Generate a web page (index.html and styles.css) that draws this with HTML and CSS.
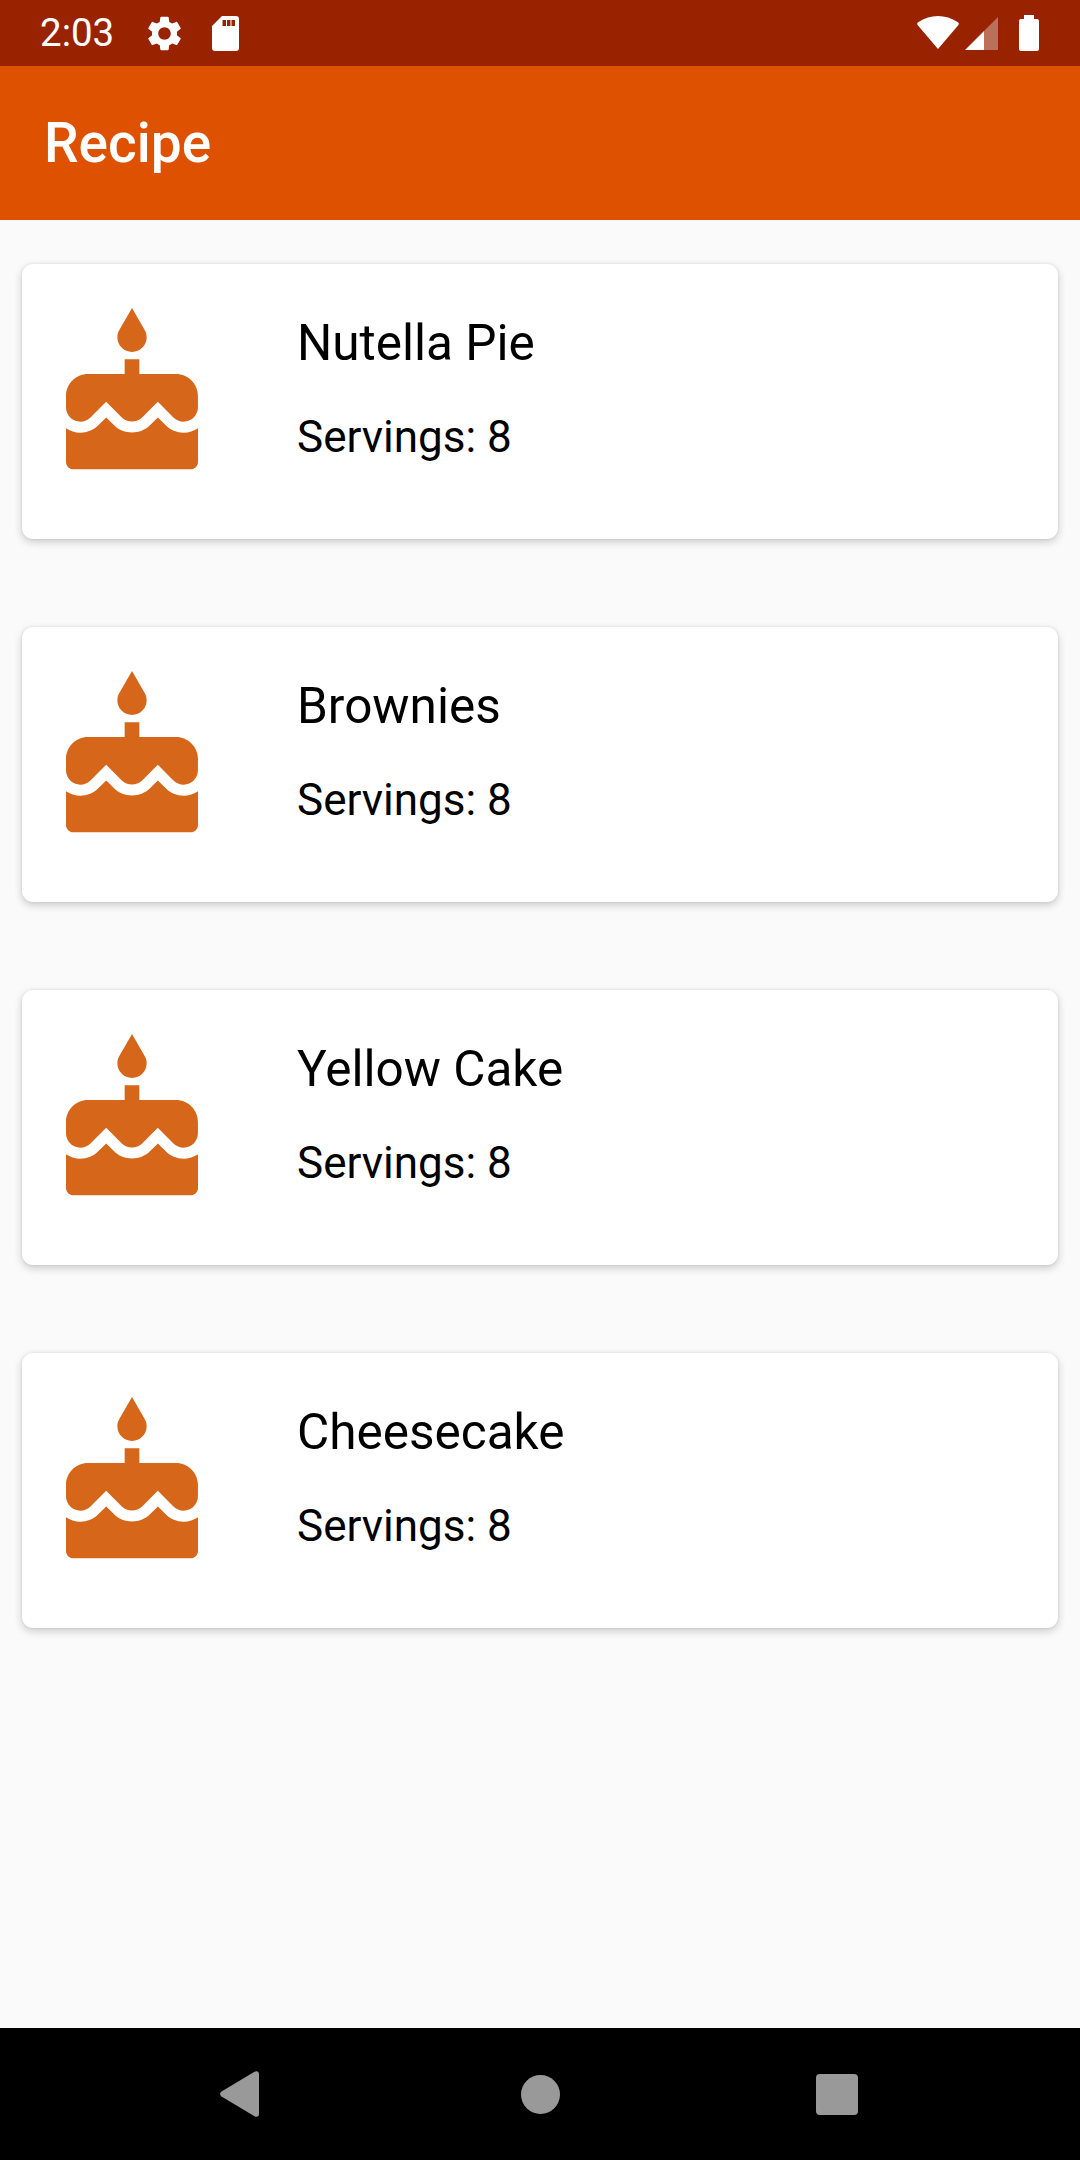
FILE: index.html
```html
<!DOCTYPE html>
<html lang="en">
<head>
<meta charset="utf-8">
<title>Recipe</title>
<link rel="stylesheet" href="styles.css">
</head>
<body>
<div class="screen">
  <header class="status-bar">
    <span class="clock">2:03</span>
    <svg class="ic-gear" viewBox="2.5 2 19 20"><path d="M19.14 12.94c.04-.3.06-.61.06-.94 0-.32-.02-.64-.07-.94l2.03-1.58c.18-.14.23-.41.12-.61l-1.92-3.32c-.12-.22-.37-.29-.59-.22l-2.39.96c-.5-.38-1.03-.7-1.62-.94l-.36-2.54c-.04-.24-.24-.41-.48-.41h-3.84c-.24 0-.43.17-.47.41l-.36 2.54c-.59.24-1.13.57-1.62.94l-2.39-.96c-.22-.08-.47 0-.59.22L2.74 8.87c-.12.21-.08.47.12.61l2.03 1.58c-.05.3-.09.63-.09.94s.02.64.07.94l-2.03 1.58c-.18.14-.23.41-.12.61l1.92 3.32c.12.22.37.29.59.22l2.39-.96c.5.38 1.03.7 1.62.94l.36 2.54c.05.24.24.41.48.41h3.84c.24 0 .44-.17.47-.41l.36-2.54c.59-.24 1.13-.56 1.62-.94l2.39.96c.22.08.47 0 .59-.22l1.92-3.32c.12-.22.07-.47-.12-.61l-2.01-1.58zM12 15.6c-1.98 0-3.6-1.62-3.6-3.6s1.62-3.6 3.6-3.6 3.6 1.62 3.6 3.6-1.62 3.6-3.6 3.6z"/></svg>
    <svg class="ic-sd" viewBox="0 0 27 35"><path fill-rule="evenodd" d="M10 0H24a3 3 0 0 1 3 3V32a3 3 0 0 1-3 3H3a3 3 0 0 1-3-3V10ZM10.5 4V10H14V4ZM15 4V10H18.5V4ZM19.5 4V10H23V4Z"/></svg>
    <svg class="ic-wifi" viewBox="0 0 42 33"><path d="M21 33 1 9.5C-.4 7.8 0 7 1.500 6 13-2 29-2 40.500 6 42 7 42.400 7.800 41 9.500Z"/></svg>
    <svg class="ic-signal" viewBox="0 0 33 33"><path d="M0 33 19 14V33Z"/><path class="dim" d="M19 14 33 0V33H19Z"/></svg>
    <svg class="ic-battery" viewBox="0 0 20 36"><path d="M5 0H15V4H18a2 2 0 0 1 2 2V34a2 2 0 0 1-2 2H2a2 2 0 0 1-2-2V6a2 2 0 0 1 2-2H5Z"/></svg>
  </header>
  <div class="app-bar"><h1 class="app-title">Recipe</h1></div>
  <main class="list">
    <article class="card">
      <svg class="cake" viewBox="0 0 24 24"><path d="M12 6c1.110 0 2-.9 2-2 0-.38-.1-.73-.29-1.030L12 0l-1.710 2.970c-.19.3-.29.65-.29 1.030 0 1.100.9 2 2 2zm4.600 9.990l-1.070-1.070-1.080 1.070c-1.300 1.300-3.580 1.310-4.890 0l-1.070-1.070-1.090 1.070C6.750 16.640 5.880 17 4.960 17c-.73 0-1.400-.23-1.960-.61V21c0 .55.45 1 1 1h16c.55 0 1-.45 1-1v-4.610c-.56.38-1.230.61-1.960.61-.92 0-1.790-.36-2.440-1.010zM18 9h-5V7h-2v2H6c-1.660 0-3 1.340-3 3v1.540c0 1.080.88 1.960 1.960 1.960.52 0 1.020-.2 1.380-.57l2.140-2.130 2.130 2.130c.74.74 2.030.74 2.770 0l2.140-2.130 2.130 2.130c.37.37.86.57 1.380.57 1.080 0 1.960-.88 1.960-1.960V12C21 10.340 19.660 9 18 9z"/></svg>
      <div class="card-text">
        <h2 class="card-title">Nutella Pie</h2>
        <p class="card-sub">Servings: 8</p>
      </div>
    </article>
    <article class="card">
      <svg class="cake" viewBox="0 0 24 24"><path d="M12 6c1.110 0 2-.9 2-2 0-.38-.1-.73-.29-1.030L12 0l-1.710 2.970c-.19.3-.29.65-.29 1.030 0 1.100.9 2 2 2zm4.600 9.990l-1.070-1.070-1.080 1.070c-1.300 1.300-3.580 1.310-4.890 0l-1.070-1.070-1.090 1.070C6.750 16.640 5.880 17 4.960 17c-.73 0-1.400-.23-1.960-.61V21c0 .55.45 1 1 1h16c.55 0 1-.45 1-1v-4.610c-.56.38-1.230.61-1.960.61-.92 0-1.790-.36-2.440-1.010zM18 9h-5V7h-2v2H6c-1.660 0-3 1.340-3 3v1.540c0 1.080.88 1.960 1.960 1.960.52 0 1.020-.2 1.380-.57l2.140-2.130 2.130 2.130c.74.74 2.030.74 2.770 0l2.140-2.130 2.130 2.130c.37.37.86.57 1.380.57 1.080 0 1.960-.88 1.960-1.960V12C21 10.340 19.660 9 18 9z"/></svg>
      <div class="card-text">
        <h2 class="card-title">Brownies</h2>
        <p class="card-sub">Servings: 8</p>
      </div>
    </article>
    <article class="card">
      <svg class="cake" viewBox="0 0 24 24"><path d="M12 6c1.110 0 2-.9 2-2 0-.38-.1-.73-.29-1.030L12 0l-1.710 2.970c-.19.3-.29.65-.29 1.030 0 1.100.9 2 2 2zm4.600 9.990l-1.070-1.070-1.080 1.070c-1.300 1.300-3.580 1.310-4.890 0l-1.070-1.070-1.090 1.070C6.750 16.640 5.880 17 4.960 17c-.73 0-1.400-.23-1.960-.61V21c0 .55.45 1 1 1h16c.55 0 1-.45 1-1v-4.610c-.56.38-1.230.61-1.960.61-.92 0-1.790-.36-2.440-1.010zM18 9h-5V7h-2v2H6c-1.660 0-3 1.340-3 3v1.540c0 1.080.88 1.960 1.960 1.960.52 0 1.020-.2 1.380-.57l2.140-2.130 2.130 2.130c.74.74 2.030.74 2.770 0l2.140-2.130 2.130 2.130c.37.37.86.57 1.380.57 1.080 0 1.960-.88 1.960-1.960V12C21 10.340 19.660 9 18 9z"/></svg>
      <div class="card-text">
        <h2 class="card-title">Yellow Cake</h2>
        <p class="card-sub">Servings: 8</p>
      </div>
    </article>
    <article class="card">
      <svg class="cake" viewBox="0 0 24 24"><path d="M12 6c1.110 0 2-.9 2-2 0-.38-.1-.73-.29-1.030L12 0l-1.710 2.970c-.19.3-.29.65-.29 1.030 0 1.100.9 2 2 2zm4.600 9.990l-1.070-1.070-1.080 1.070c-1.300 1.300-3.580 1.310-4.890 0l-1.070-1.070-1.090 1.070C6.750 16.640 5.880 17 4.960 17c-.73 0-1.400-.23-1.960-.61V21c0 .55.45 1 1 1h16c.55 0 1-.45 1-1v-4.610c-.56.38-1.230.61-1.960.61-.92 0-1.790-.36-2.440-1.010zM18 9h-5V7h-2v2H6c-1.660 0-3 1.340-3 3v1.540c0 1.080.88 1.960 1.960 1.960.52 0 1.020-.2 1.380-.57l2.140-2.130 2.130 2.130c.74.74 2.030.74 2.770 0l2.140-2.130 2.130 2.130c.37.37.86.57 1.380.57 1.080 0 1.960-.88 1.960-1.960V12C21 10.340 19.660 9 18 9z"/></svg>
      <div class="card-text">
        <h2 class="card-title">Cheesecake</h2>
        <p class="card-sub">Servings: 8</p>
      </div>
    </article>
  </main>
  <nav class="nav-bar">
    <svg class="nav-back" viewBox="0 0 39 46"><path d="M1.500 25.500C-.5 24 -.5 22 1.500 20.500L34.500 .8C37 -.6 39 .5 39 3V43C39 45.500 37 46.600 34.500 45.200Z"/></svg>
    <span class="nav-home"></span>
    <span class="nav-recent"></span>
  </nav>
</div>
</body>
</html>
```
FILE: styles.css
```css
* { box-sizing: border-box; }
html, body { margin: 0; padding: 0; }
body { font-family: Roboto, "Liberation Sans", sans-serif; background: #fafafa; }
.screen { width: 1080px; height: 2160px; display: flex; flex-direction: column; overflow: hidden; }

.status-bar { height: 66px; flex: none; background: #992200; display: flex; align-items: center; color: #fff; padding-left: 40px; }
.status-bar svg { fill: #fff; flex: none; display: block; }
.clock { font-size: 38.5px; line-height: 66px; width: 108px; flex: none; }
.ic-gear { width: 33px; height: 35px; }
.ic-sd { width: 27px; height: 35px; margin-left: 31px; }
.ic-wifi { width: 42px; height: 33px; margin-left: auto; margin-bottom: 2px; }
.ic-signal { width: 33px; height: 33px; margin-left: 6px; }
.ic-signal .dim { opacity: .35; }
.ic-battery { width: 20px; height: 36px; margin-left: 21px; margin-right: 41px; }

.app-bar { height: 154px; flex: none; background: #dd5100; display: flex; align-items: center; padding-left: 44px; position: relative; z-index: 1; }
.app-title { margin: 0; font-size: 55px; font-weight: 500; color: #fff; line-height: 66px; }

.list { flex: 1; padding: 44px 22px 0; display: flex; flex-direction: column; gap: 88px; }
.card { height: 275px; flex: none; background: #fff; border-radius: 11px; box-shadow: 0 3px 8px rgba(0, 0, 0, .2), 0 0 3px rgba(0, 0, 0, .08); display: flex; align-items: flex-start; padding: 44px 0 0 22px; }
.cake { width: 176px; height: 176px; flex: none; fill: #d6661a; display: block; }
.card-text { margin-left: 77px; }
.card-title { margin: 0; font-size: 49.5px; font-weight: 400; line-height: 70px; color: #000; }
.card-sub { margin: 33px 0 0; font-size: 44px; line-height: 52px; color: #000; }

.nav-bar { height: 132px; flex: none; background: #000; display: flex; align-items: center; padding-left: 220px; }
.nav-back { width: 39px; height: 46px; fill: #999; display: block; flex: none; }
.nav-home { width: 39px; height: 39px; border-radius: 50%; background: #999; margin-left: 262px; flex: none; }
.nav-recent { width: 42px; height: 41px; border-radius: 4px; background: #999; margin-left: 256px; flex: none; }
```
